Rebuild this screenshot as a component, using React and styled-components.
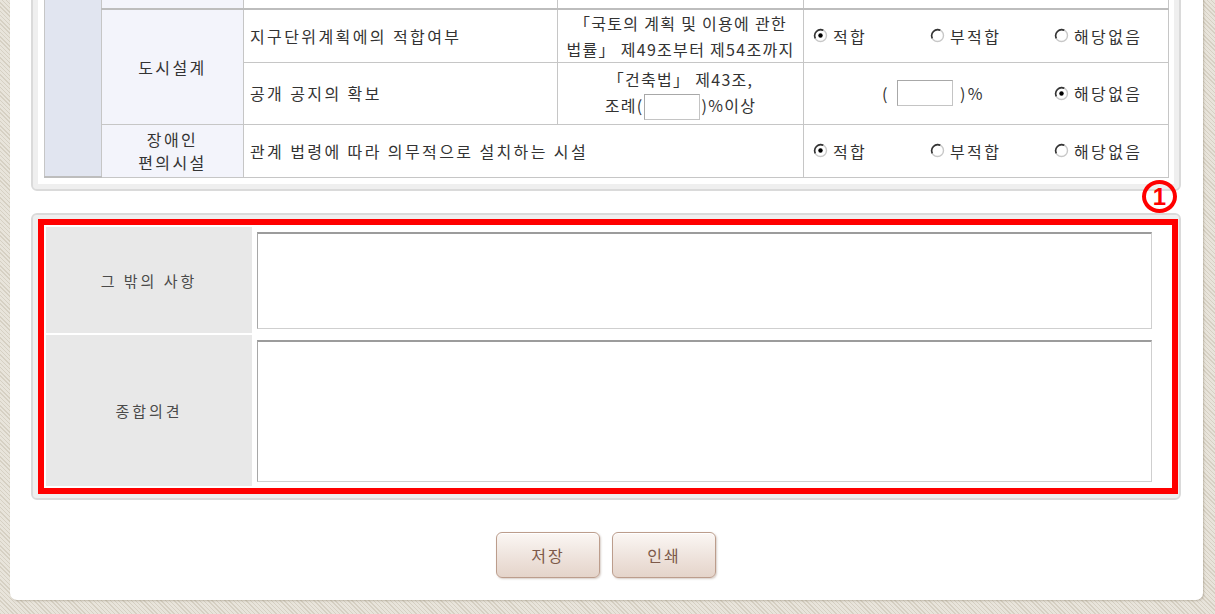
import React from "react";
import styled, { createGlobalStyle } from "styled-components";

const GlobalStyle = createGlobalStyle`
  html, body {
    margin: 0;
    padding: 0;
  }
  body {
    font-family: "Noto Sans CJK KR", "Noto Sans", sans-serif;
    color: #333;
    background-color: #e3ded3;
    background-image: repeating-linear-gradient(
      45deg,
      #d6d0c3 0px,
      #d6d0c3 1px,
      #e8e4db 1px,
      #e8e4db 3px
    );
    overflow: hidden;
  }
`;

const Page = styled.div`
  width: 1215px;
  height: 614px;
  padding: 0 12px 0 10px;
  box-sizing: border-box;
  overflow: hidden;
`;

const Panel = styled.div`
  margin-top: -30px;
  height: 630px;
  box-sizing: border-box;
  background: #fff;
  border-radius: 0 0 7px 7px;
  box-shadow: 1px 1px 2px rgba(120, 110, 90, 0.35);
  padding: 0 22px 0 21px;
  display: flex;
  flex-direction: column;
`;

const Box = styled.div`
  position: relative;
  border: 2px solid #dadada;
  border-radius: 6px;
  box-shadow: inset 0 0 0 5px #efefef;
  background: #fff;
  padding: ${(p) => p.$pad || "11px"};
  margin-top: ${(p) => p.$top || "0"};
`;

const Grid = styled.table`
  width: 1124px;
  border-collapse: collapse;
  table-layout: fixed;
  font-size: 16px;
  letter-spacing: 2.4px;
  td {
    border: 1px solid #c6c6c6;
    padding: 0;
    vertical-align: middle;
    line-height: 26px;
    white-space: nowrap;
  }
  tr:first-child td {
    border-bottom: 2px solid #bdbdbd;
  }
`;

const SideCell = styled.td`
  background: #e1e5f0;
`;

const GroupCell = styled.td`
  background: #f3f4fb;
  text-align: center;
  line-height: ${(p) => p.$lh || "26px"} !important;
`;

const ItemCell = styled.td`
  padding-left: 6px !important;
`;

const LawCell = styled.td`
  text-align: center;
  letter-spacing: 1.3px;
`;

const ChoiceRow = styled.div`
  display: grid;
  grid-template-columns: 117px 124px 1fr;
  align-items: center;
  padding-left: 9px;
`;

const RatioWrap = styled.div`
  grid-column: 1 / span 2;
  display: flex;
  justify-content: center;
  align-items: center;
  gap: 6px;
`;

const Choice = styled.label`
  display: flex;
  align-items: center;
  gap: 5px;
`;

const SmallInput = styled.span`
  display: inline-block;
  width: 56px;
  height: 26px;
  box-sizing: border-box;
  border: 1px solid #c4c4c4;
  border-top-color: #a8a8a8;
  border-left-color: #a8a8a8;
  background: #fff;
  vertical-align: middle;
  margin: 0 1px;
`;

const Marked = styled.div`
  border: 6px solid #ff0000;
  margin-left: 1px;
  padding: 2px;
`;

const NoteTable = styled.div`
  display: grid;
  grid-template-columns: 206px 1fr;
  grid-template-rows: 106px 151px;
  row-gap: 2px;
`;

const NoteLabel = styled.div`
  background: #e8e8e8;
  display: flex;
  align-items: center;
  justify-content: center;
  font-size: 15px;
  letter-spacing: 3px;
  color: #4a4a4a;
`;

const NoteField = styled.div`
  padding: 5px 18px 4px 5px;
  display: flex;
  background: #fff;
`;

const TextBox = styled.div`
  flex: 1;
  border: 1px solid #cfcfcf;
  border-top: 2px solid #9c9c9c;
  border-left: 1px solid #a8a8a8;
  background: #fff;
`;

const Badge = styled.div`
  position: absolute;
  right: 2px;
  top: -35px;
  width: 27px;
  height: 25px;
  border: 4px solid #ff0000;
  border-radius: 50%;
  color: #ff0000;
  font-family: "Liberation Sans", sans-serif;
  font-weight: bold;
  font-size: 24px;
  line-height: 25px;
  text-align: center;
`;

const Buttons = styled.div`
  display: flex;
  justify-content: center;
  gap: 12px;
  margin-top: 32px;
`;

const Button = styled.button`
  width: 104px;
  height: 46px;
  border: 1px solid #bc9d8c;
  border-radius: 6px;
  background: linear-gradient(#fbf7f4, #ede1da 60%, #e4d4ca);
  box-shadow: inset 0 1px 0 #fff, 1px 1px 2px rgba(120, 90, 70, 0.3);
  color: #7d5a4a;
  font-family: "Noto Sans CJK KR", sans-serif;
  font-size: 16px;
  letter-spacing: 2px;
  cursor: pointer;
`;

const Radio = ({ checked }) => (
  <svg width="15" height="15" viewBox="0 0 15 15">
    <circle cx="7.5" cy="7.5" r="6" fill="#fff" stroke="#c8c8c8" strokeWidth="1.4" />
    <path d="M2.3 10.3 A6 6 0 0 1 10.3 2.3" fill="none" stroke="#333" strokeWidth="1.6" />
    {checked && <circle cx="7.5" cy="7.5" r="2.2" fill="#000" />}
  </svg>
);

const Choices = ({ value }) => (
  <ChoiceRow>
    {["적합", "부적합", "해당없음"].map((t) => (
      <Choice key={t}>
        <Radio checked={value === t} />
        {t}
      </Choice>
    ))}
  </ChoiceRow>
);

export default function App() {
  return (
    <>
      <GlobalStyle />
      <Page>
        <Panel>
          <Box>
            <Grid>
              <colgroup>
                <col style={{ width: 57 }} />
                <col style={{ width: 142 }} />
                <col style={{ width: 314 }} />
                <col style={{ width: 246 }} />
                <col style={{ width: 365 }} />
              </colgroup>
              <tbody>
                <tr style={{ height: 25 }}>
                  <SideCell rowSpan={4} />
                  <GroupCell />
                  <td />
                  <td />
                  <td />
                </tr>
                <tr style={{ height: 53 }}>
                  <GroupCell rowSpan={2}>도시설계</GroupCell>
                  <ItemCell>지구단위계획에의 적합여부</ItemCell>
                  <LawCell>
                    「국토의 계획 및 이용에 관한
                    <br />
                    법률」 제49조부터 제54조까지
                  </LawCell>
                  <td>
                    <Choices value="적합" />
                  </td>
                </tr>
                <tr style={{ height: 62 }}>
                  <ItemCell>공개 공지의 확보</ItemCell>
                  <LawCell>
                    「건축법」 제43조,
                    <br />
                    조례(<SmallInput />)%이상
                  </LawCell>
                  <td>
                    <ChoiceRow>
                      <RatioWrap>
                        (<SmallInput />)%
                      </RatioWrap>
                      <Choice>
                        <Radio checked />
                        해당없음
                      </Choice>
                    </ChoiceRow>
                  </td>
                </tr>
                <tr style={{ height: 53 }}>
                  <GroupCell $lh="23px">
                    장애인
                    <br />
                    편의시설
                  </GroupCell>
                  <ItemCell colSpan={2}>관계 법령에 따라 의무적으로 설치하는 시설</ItemCell>
                  <td>
                    <Choices value="적합" />
                  </td>
                </tr>
              </tbody>
            </Grid>
          </Box>

          <Box $top="22px" $pad="4px 1px 4px 4px">
            <Badge>1</Badge>
            <Marked>
              <NoteTable>
                <NoteLabel>그 밖의 사항</NoteLabel>
                <NoteField>
                  <TextBox />
                </NoteField>
                <NoteLabel>종합의견</NoteLabel>
                <NoteField>
                  <TextBox />
                </NoteField>
              </NoteTable>
            </Marked>
          </Box>

          <Buttons>
            <Button>저장</Button>
            <Button>인쇄</Button>
          </Buttons>
        </Panel>
      </Page>
    </>
  );
}
